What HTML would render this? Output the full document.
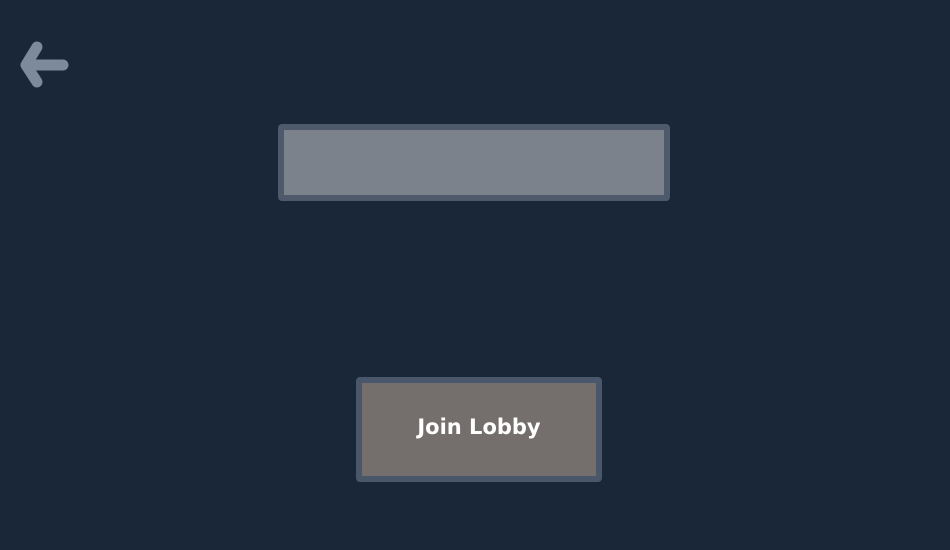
<!DOCTYPE html>
<html><head><style>
html,body{margin:0;padding:0;width:950px;height:550px;background:#1a2739;overflow:hidden;font-family:"DejaVu Sans","Liberation Sans",sans-serif}
.inp{position:absolute;left:278px;top:124px;width:380px;height:65px;border:6px solid #4e5a6b;border-radius:4px;background:#7b828c}
.btn{position:absolute;left:356px;top:377px;width:234px;height:93px;border:6px solid #4a5669;border-radius:4px;background:#746f6c;color:#fff;font-weight:bold;font-size:21px;text-align:center;line-height:89px}
svg{position:absolute;left:0;top:0}
</style></head><body>
<svg width="80" height="100"><path d="M63 65 H27 M37 47 L26 65 L37 82" stroke="#7d8a9a" stroke-width="11" fill="none" stroke-linecap="round" stroke-linejoin="round"/></svg>
<div class="inp"></div>
<div class="btn">Join Lobby</div>
</body></html>
